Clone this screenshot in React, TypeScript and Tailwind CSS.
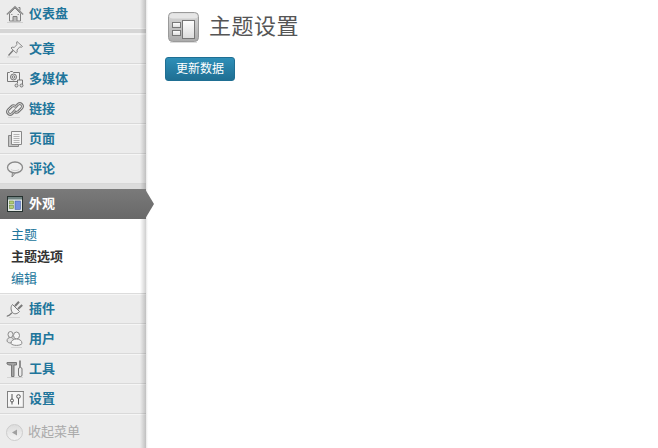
import React from 'react';

const FONT = "font-['Liberation_Sans','Noto_Sans_CJK_SC',sans-serif]";

function HomeIcon() {
  return (
    <svg width="18" height="18" viewBox="0 0 18 18" fill="none" stroke="#808080">
      <path d="M3.500 8.500v7.500h11V8.500L9 3z" fill="#ececec" />
      <path d="M.8 9.500 9 1.800l8.200 7.700" stroke="#8c8c8c" strokeWidth="1.400" />
      <path d="M12.500 2.500h1.500v3" fill="#ccc" />
      <path d="M7 16v-4.500h4V16" fill="#bbb" />
      <path d="M5 9.500h1.500M11.500 9.500H13" stroke="#999" />
      <path d="M1 17.500h16" stroke="#d0d0d0" />
    </svg>
  );
}

function PinIcon() {
  return (
    <svg width="18" height="18" viewBox="0 0 18 18" fill="none" stroke="#8a8a8a">
      <path d="M11 1.500 16.500 6.500l-1.200.8-1.500-.5L11 10l.2 2.200-1 .8L5 8l1-.9 2.200.3 2.900-2.900-.6-1.500z" fill="#ededed" />
      <path d="M7 10.500 2.500 15.500" stroke="#777" strokeWidth="1.300" />
      <path d="M1 17h12" stroke="#cfcfcf" />
    </svg>
  );
}

function MediaIcon() {
  return (
    <svg width="18" height="18" viewBox="0 0 18 18" fill="none" stroke="#777">
      <path d="M1.500 2.500h2l1-1h2l1 1h6v9h-12z" fill="#efefef" />
      <circle cx="7.500" cy="7" r="3" fill="#ddd" />
      <circle cx="7.500" cy="7" r="1.200" fill="#fff" />
      <path d="M11.500 13.500V10h5v5.500" fill="#ececec" />
      <circle cx="10.500" cy="15.500" r="1.500" fill="#ddd" />
      <circle cx="15.500" cy="15.500" r="1.500" fill="#ddd" />
    </svg>
  );
}

function LinkIcon() {
  const top = 'M8.500 8 12 4.300a2.700 2.700 0 0 1 3.900 3.700l-3.500 3.500a2.700 2.700 0 0 1-3.500.3';
  const bottom = 'M9.500 10 6 13.700a2.700 2.700 0 0 1-3.900-3.700l3.500-3.500a2.700 2.700 0 0 1 3.500-.3';
  return (
    <svg width="18" height="18" viewBox="0 0 18 18" fill="none">
      <path d={top} stroke="#777" strokeWidth="2.800" />
      <path d={top} stroke="#ddd" strokeWidth="1" />
      <path d={bottom} stroke="#777" strokeWidth="2.800" />
      <path d={bottom} stroke="#ddd" strokeWidth="1" />
      <path d="M2 17.500h12" stroke="#d4d4d4" />
    </svg>
  );
}

function PageIcon() {
  return (
    <svg width="18" height="18" viewBox="0 0 18 18" fill="none" stroke="#888">
      <path d="M2.500 5.500h10v11h-10z" fill="#c4c4c4" />
      <path d="M5.500 1.500h10v13h-10z" fill="#f4f4f4" />
      <path d="M7.500 4.500h6M7.500 6.500h6M7.500 8.500h6M7.500 10.500h6M7.500 12.500h6" stroke="#b4b4b4" />
    </svg>
  );
}

function CommentIcon() {
  return (
    <svg width="18" height="18" viewBox="0 0 18 18" fill="none" stroke="#8a8a8a">
      <path d="M6.500 12 6 17l4-4.800" fill="#cfcfcf" />
      <ellipse cx="9" cy="7.500" rx="7.500" ry="5.500" fill="#f0f0f0" strokeWidth="1.300" />
      <path d="M5 9.500c2 1.500 6 1.500 8 0" stroke="#d2d2d2" />
    </svg>
  );
}

function AppearanceIcon() {
  return (
    <svg width="16" height="16" viewBox="0 0 16 16">
      <rect x="0.500" y="0.500" width="15" height="15" fill="#e3e9e6" stroke="#26322f" />
      <rect x="1" y="1" width="14" height="2.500" fill="#6f8280" />
      <rect x="2.500" y="5" width="4" height="3" fill="#b3cc76" stroke="#5e7a2e" strokeWidth="0.500" />
      <rect x="2.500" y="9.500" width="4" height="3" fill="#b3cc76" stroke="#5e7a2e" strokeWidth="0.500" />
      <rect x="8" y="5" width="5.500" height="8.500" fill="#7590df" stroke="#3b55a0" strokeWidth="0.500" />
    </svg>
  );
}

function PluginIcon() {
  return (
    <svg width="18" height="18" viewBox="0 0 18 18" fill="none" stroke="#7a7a7a">
      <path d="M6.500 4.500 13.500 11.500c-2 2.500-5 3-6.800 1.300S4.200 6.700 6.500 4.500z" fill="#f2f2f2" />
      <path d="M9 6 13 1.800M12 9 16.200 5" strokeWidth="2" />
      <path d="M6 12.800 3.500 15c-1 .8-2 .5-2.500 1.500" strokeWidth="1.300" />
      <path d="M3 17.500h11" stroke="#d4d4d4" />
    </svg>
  );
}

function UsersIcon() {
  return (
    <svg width="18" height="18" viewBox="0 0 18 18" fill="none" stroke="#8a8a8a">
      <ellipse cx="4.500" cy="4.500" rx="2.500" ry="3" fill="#ededed" />
      <path d="M1 11c0-2.500 1.500-3.500 3.500-3.500s3 1 3 2.500l-2.500 3c-2 0-3.500-.5-4-2z" fill="#e4e4e4" />
      <ellipse cx="10.500" cy="5.500" rx="3" ry="3.500" fill="#f4f4f4" />
      <path d="M5 13.500c0-3 2.500-4.500 5.500-4.500s5.500 1.500 5.500 4.500c-1.500 2.500-9.500 2.500-11 0z" fill="#f6f6f6" />
      <path d="M5 17.500h11" stroke="#d4d4d4" />
    </svg>
  );
}

function ToolsIcon() {
  return (
    <svg width="18" height="18" viewBox="0 0 18 18" fill="none" stroke="#777">
      <path d="M1 2.500h9.500v2.500H8v11.500H5.500V5H3L1 4z" fill="#a4a4a4" />
      <path d="M14 .5v6.500" strokeWidth="1.600" />
      <rect x="12.500" y="7.500" width="3.500" height="9" rx="1.500" fill="#ececec" />
      <path d="M1 17.500h16" stroke="#d4d4d4" />
    </svg>
  );
}

function SettingsIcon() {
  return (
    <svg width="17" height="17" viewBox="0 0 17 17" fill="none" stroke="#555">
      <rect x="0.500" y="0.500" width="16" height="16" fill="#f6f6f6" stroke="#808080" />
      <path d="M16.500 1v15.500H1" stroke="#999" strokeWidth="1.400" />
      <circle cx="5" cy="9.500" r="1.500" />
      <path d="M5 3v5M5 11v2.500" />
      <circle cx="11.500" cy="5.500" r="1.800" />
      <path d="M11.500 7.500v6" />
    </svg>
  );
}

function CollapseIcon() {
  return (
    <span className="flex h-[17px] w-[17px] items-center justify-center rounded-full border border-[#cccccc] bg-gradient-to-b from-[#dcdcdc] to-[#f4f4f4]">
      <svg width="7" height="7" viewBox="0 0 7 7">
        <path d="M6 .5v6L1 3.500z" fill="#a0a0a0" />
      </svg>
    </span>
  );
}

function ScreenIcon() {
  return (
    <svg width="31" height="32" viewBox="0 0 31 32">
      <defs>
        <linearGradient id="body" x1="0" y1="0" x2="0" y2="1">
          <stop offset="0" stopColor="#d8d8d8" />
          <stop offset="1" stopColor="#ababab" />
        </linearGradient>
        <linearGradient id="pane" x1="0" y1="0" x2="0" y2="1">
          <stop offset="0" stopColor="#ffffff" />
          <stop offset="1" stopColor="#dcdcdc" />
        </linearGradient>
      </defs>
      <rect x="0.500" y="0.500" width="30" height="29" rx="4" fill="url(#body)" stroke="#9a9a9a" />
      <rect x="1.500" y="1.500" width="28" height="5" rx="3" fill="#e6e6e6" />
      <rect x="4.500" y="10.500" width="8" height="5" fill="url(#pane)" stroke="#777" />
      <rect x="4.500" y="18.500" width="8" height="5" fill="url(#pane)" stroke="#777" />
      <rect x="14.500" y="8.500" width="12" height="18" fill="url(#pane)" stroke="#777" />
      <path d="M2 30.500h27" stroke="#dddddd" />
    </svg>
  );
}

function MenuRow({ icon, label }: { icon: React.ReactNode; label: string }) {
  return (
    <div className="flex h-[30px] items-center border-t border-t-[#f6f6f6] border-b border-b-[#d9d9d9] pl-[6px]">
      <span className="flex w-[18px] shrink-0 justify-center">{icon}</span>
      <span className="ml-[5px] text-[13px] font-bold text-[#21759b]">{label}</span>
    </div>
  );
}

export default function App() {
  return (
    <div className={`${FONT} flex h-[448px] w-[658px] overflow-hidden bg-white`}>
      {/* Sidebar */}
      <div className="relative flex w-[146px] shrink-0 flex-col bg-[#ececec]">
        <div className="flex h-[28px] items-center pl-[6px]">
          <span className="flex w-[18px] shrink-0 justify-center"><HomeIcon /></span>
          <span className="ml-[5px] text-[13px] font-bold text-[#21759b]">仪表盘</span>
        </div>
        <div className="h-[6px] border-y border-y-[#f4f4f4] bg-[#d6d6d6]" />
        <MenuRow icon={<PinIcon />} label="文章" />
        <MenuRow icon={<MediaIcon />} label="多媒体" />
        <MenuRow icon={<LinkIcon />} label="链接" />
        <MenuRow icon={<PageIcon />} label="页面" />
        <MenuRow icon={<CommentIcon />} label="评论" />
        <div className="h-[5px] bg-[#dcdcdc]" />

        {/* Current item */}
        <div className="relative z-10 flex h-[30px] items-center bg-gradient-to-b from-[#7a7a7a] to-[#686868] pl-[6px]">
          <span className="flex w-[18px] shrink-0 justify-center"><AppearanceIcon /></span>
          <span className="ml-[5px] text-[13px] font-bold text-white">外观</span>
          <span className="absolute left-[145px] top-0 h-[30px] w-[9px] bg-gradient-to-b from-[#7a7a7a] to-[#686868] [clip-path:polygon(0_0,100%_50%,0_100%)]" />
        </div>
        <div className="flex h-[75px] flex-col border-b border-b-[#dcdcdc] bg-white pl-[11px] pt-[5px] text-[13px] leading-[22px]">
          <span className="text-[#21759b]">主题</span>
          <span className="font-bold text-[#333]">主题选项</span>
          <span className="text-[#21759b]">编辑</span>
        </div>

        <MenuRow icon={<PluginIcon />} label="插件" />
        <MenuRow icon={<UsersIcon />} label="用户" />
        <MenuRow icon={<ToolsIcon />} label="工具" />
        <MenuRow icon={<SettingsIcon />} label="设置" />
        <div className="flex flex-1 items-center gap-[5px] border-t border-t-[#f6f6f6] pl-[6px] pt-[1px] text-[13px] text-[#aaaaaa]">
          <CollapseIcon />
          <span>收起菜单</span>
        </div>

        {/* Edge shadow over the rows */}
        <span className="pointer-events-none absolute inset-y-0 right-0 w-[6px] bg-gradient-to-r from-[#00000000] to-[#00000030]" />
      </div>
      <div className="w-[2px] shrink-0 bg-gradient-to-r from-[#e8e8e8] to-[#ffffff]" />

      {/* Content */}
      <div className="flex-1 pl-[17px] pt-[12px]">
        <div className="flex items-start gap-[10px] pl-[3px]">
          <ScreenIcon />
          <h1 className="text-[22px] font-normal leading-[30px] tracking-[0.5px] text-[#555]">主题设置</h1>
        </div>
        <button className="mt-[13px] flex h-[24px] w-[70px] items-center justify-center rounded-[3px] border border-[#1f6f93] bg-gradient-to-b from-[#2e8fb8] to-[#1f6f93] text-[12px] text-white">
          更新数据
        </button>
      </div>
    </div>
  );
}
